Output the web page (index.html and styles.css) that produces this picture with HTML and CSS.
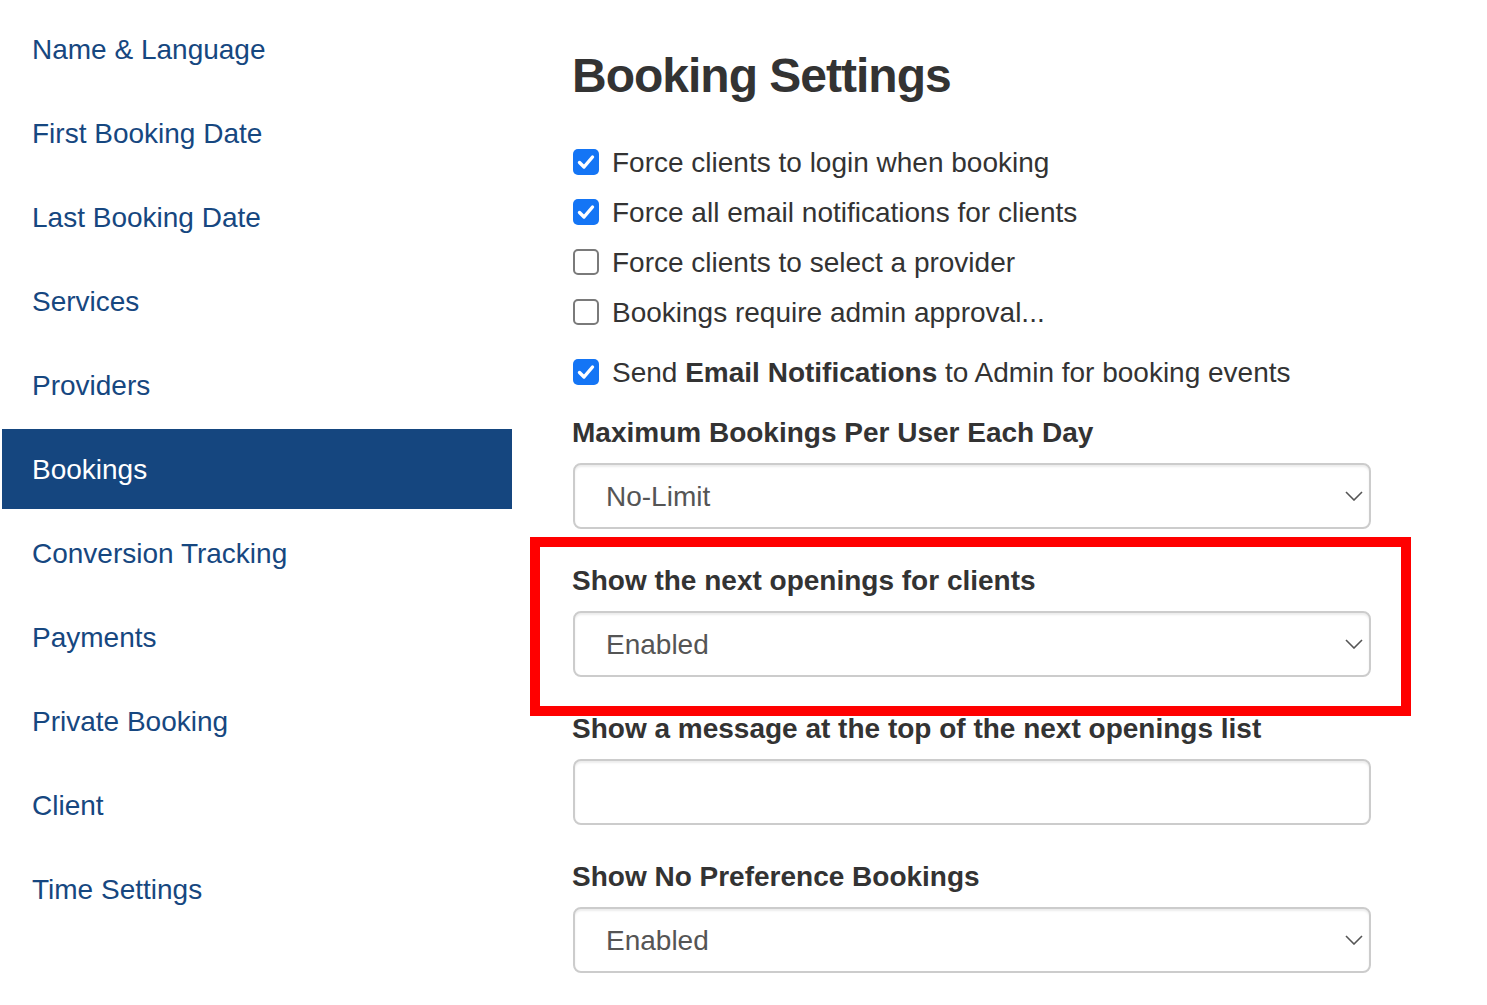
FILE: index.html
```html
<!DOCTYPE html>
<html lang="en">
<head>
<meta charset="utf-8">
<title>Booking Settings</title>
<link rel="stylesheet" href="styles.css">
</head>
<body>
<div class="layout">
  <nav class="sidebar">
    <a class="nav-item">Name &amp; Language</a>
    <a class="nav-item">First Booking Date</a>
    <a class="nav-item">Last Booking Date</a>
    <a class="nav-item">Services</a>
    <a class="nav-item">Providers</a>
    <a class="nav-item active">Bookings</a>
    <a class="nav-item">Conversion Tracking</a>
    <a class="nav-item">Payments</a>
    <a class="nav-item">Private Booking</a>
    <a class="nav-item">Client</a>
    <a class="nav-item">Time Settings</a>
  </nav>
  <main class="main">
    <h1 class="title">Booking Settings</h1>
    <div class="checks">
      <div class="check-row">
        <span class="box checked"><svg viewBox="0 0 26 26" width="26" height="26"><path d="M6.5 13.5 L11 18 L19.5 8" fill="none" stroke="#fff" stroke-width="3.4" stroke-linecap="round" stroke-linejoin="round"/></svg></span>
        <span class="check-text">Force clients to login when booking</span>
      </div>
      <div class="check-row">
        <span class="box checked"><svg viewBox="0 0 26 26" width="26" height="26"><path d="M6.5 13.5 L11 18 L19.5 8" fill="none" stroke="#fff" stroke-width="3.4" stroke-linecap="round" stroke-linejoin="round"/></svg></span>
        <span class="check-text">Force all email notifications for clients</span>
      </div>
      <div class="check-row">
        <span class="box"></span>
        <span class="check-text">Force clients to select a provider</span>
      </div>
      <div class="check-row">
        <span class="box"></span>
        <span class="check-text">Bookings require admin approval...</span>
      </div>
      <div class="check-row spaced">
        <span class="box checked"><svg viewBox="0 0 26 26" width="26" height="26"><path d="M6.5 13.5 L11 18 L19.5 8" fill="none" stroke="#fff" stroke-width="3.4" stroke-linecap="round" stroke-linejoin="round"/></svg></span>
        <span class="check-text">Send <b>Email Notifications</b> to Admin for booking events</span>
      </div>
    </div>

    <div class="field first">
      <label class="field-label">Maximum Bookings Per User Each Day</label>
      <div class="control select">
        <span>No-Limit</span>
        <svg class="chev" viewBox="0 0 18 10" width="18" height="10"><path d="M1 1 L9 9 L17 1" fill="none" stroke="#555" stroke-width="1.6"/></svg>
      </div>
    </div>

    <div class="field highlight">
      <label class="field-label">Show the next openings for clients</label>
      <div class="control select">
        <span>Enabled</span>
        <svg class="chev" viewBox="0 0 18 10" width="18" height="10"><path d="M1 1 L9 9 L17 1" fill="none" stroke="#555" stroke-width="1.6"/></svg>
      </div>
      <div class="annotation"></div>
    </div>

    <div class="field">
      <label class="field-label">Show a message at the top of the next openings list</label>
      <div class="control input"></div>
    </div>

    <div class="field">
      <label class="field-label">Show No Preference Bookings</label>
      <div class="control select">
        <span>Enabled</span>
        <svg class="chev" viewBox="0 0 18 10" width="18" height="10"><path d="M1 1 L9 9 L17 1" fill="none" stroke="#555" stroke-width="1.6"/></svg>
      </div>
    </div>
  </main>
</div>
</body>
</html>
```

FILE: styles.css
```css
html, body {
  margin: 0;
  padding: 0;
  background: #fff;
}

body {
  font-family: "Liberation Sans", Arial, Helvetica, sans-serif;
  color: #333;
  overflow: hidden;
}

.layout {
  display: flex;
  align-items: flex-start;
}

.sidebar {
  width: 510px;
  margin-left: 2px;
  padding-top: 9px;
  display: flex;
  flex-direction: column;
  gap: 4px;
}

.nav-item {
  display: flex;
  align-items: center;
  height: 80px;
  box-sizing: border-box;
  padding-left: 30px;
  padding-top: 2px;
  font-size: 28px;
  color: #164780;
  text-decoration: none;
}

.nav-item.active {
  background: #15467f;
  color: #fff;
}

.main {
  width: 798px;
  margin-left: 61px;
}

.title {
  margin: 48px 0 0 -1px;
  font-size: 48px;
  line-height: 56px;
  font-weight: bold;
  letter-spacing: -1px;
  color: #333;
}

.checks {
  margin-top: 33px;
}

.check-row {
  display: flex;
  align-items: center;
  gap: 13px;
  height: 50px;
  font-size: 28px;
  line-height: 46px;
  color: #333;
}

.check-text {
  padding-top: 2px;
}

.check-row.spaced {
  margin-top: 10px;
}

.check-row b {
  font-weight: bold;
}

.box {
  flex: none;
  width: 26px;
  height: 26px;
  box-sizing: border-box;
  border: 2px solid #7a7a7a;
  border-radius: 5px;
  background: #fff;
  display: flex;
  align-items: center;
  justify-content: center;
}

.box.checked {
  border: none;
  background: #1475f5;
}

.box svg {
  display: block;
}

.field {
  margin-top: 31px;
}

.field.first {
  margin-top: 15px;
}

.field.highlight {
  position: relative;
}

.field-label {
  display: block;
  font-size: 28px;
  line-height: 38px;
  padding-top: 2px;
  margin-left: -1px;
  font-weight: bold;
  color: #333;
}

.control {
  margin-top: 11px;
  height: 66px;
  box-sizing: border-box;
  border: 2px solid #cccccc;
  border-radius: 8px;
  box-shadow: inset 0 2px 2px rgba(0, 0, 0, 0.075);
  background: #fff;
}

.select {
  display: flex;
  align-items: center;
  justify-content: space-between;
  padding-left: 31px;
  padding-right: 6px;
  padding-top: 2px;
  font-size: 28px;
  color: #555;
}

.chev {
  display: block;
  margin-top: -2px;
}

.annotation {
  position: absolute;
  left: -43px;
  top: -23px;
  width: 881px;
  height: 179px;
  box-sizing: border-box;
  border: 10px solid #ff0000;
  pointer-events: none;
}
```
